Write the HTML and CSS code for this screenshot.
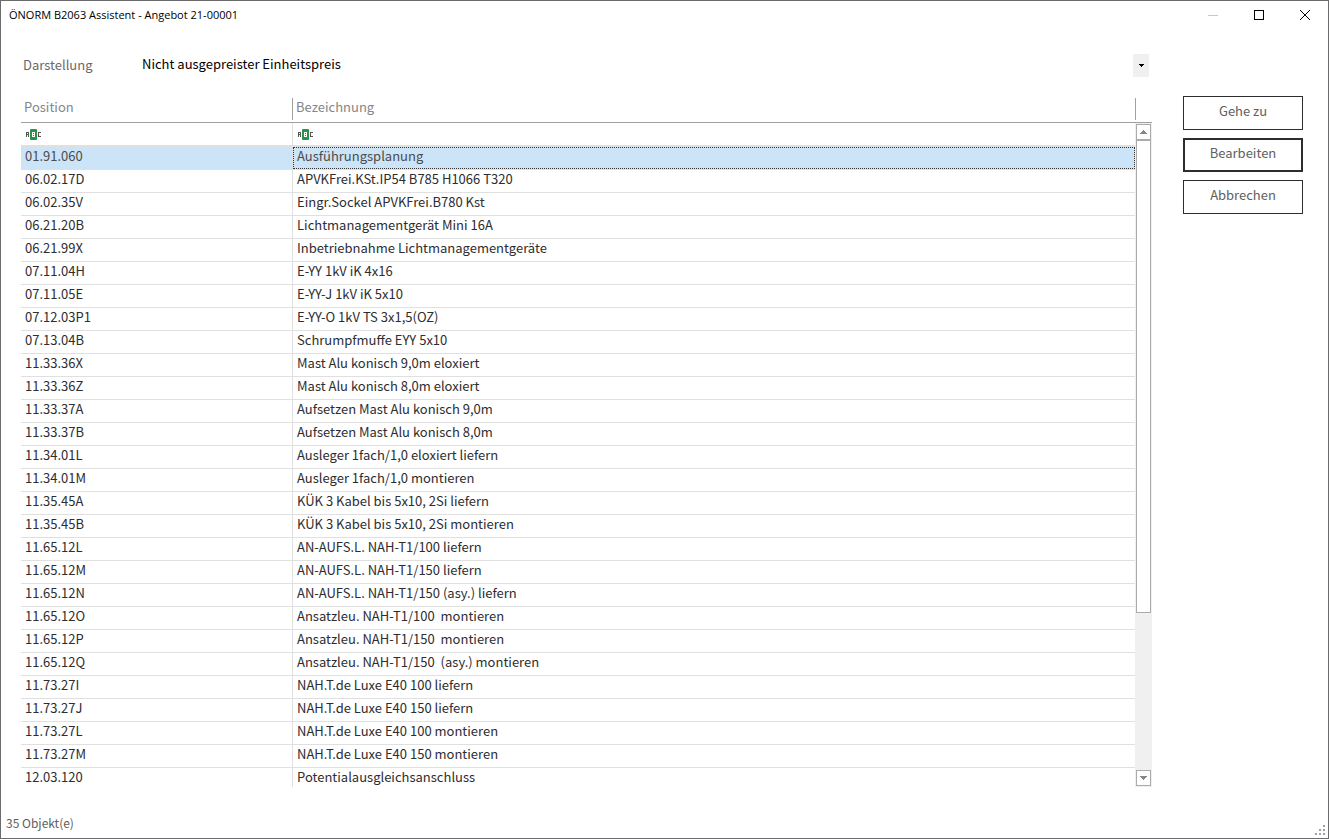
FILE: index.html
```
<!DOCTYPE html>
<html lang="de">
<head>
<meta charset="utf-8">
<title>ÖNORM B2063 Assistent - Angebot 21-00001</title>
<link rel="stylesheet" href="styles.css">
</head>
<body>
<svg class="defs" width="0" height="0" aria-hidden="true">
  <symbol id="abc" viewBox="0 0 16 11">
    <rect x="4" width="7" height="11" rx="1" fill="#2b9348" shape-rendering="geometricPrecision"/>
    <path d="M0 3h3v5H2V6H1v2H0zM1 4v1h1V4zM12 3h3v1h-2v3h2v1h-3z" fill="#555" fill-rule="evenodd"/>
    <path d="M6 3h3v5H6zM7 4v1h1V4zM7 6v1h1V6z" fill="#fff" fill-rule="evenodd"/>
  </symbol>
</svg>
<div class="window">
  <header class="titlebar">
    <h1 class="title">ÖNORM B2063 Assistent - Angebot 21-00001</h1>
    <button class="caption" type="button" aria-label="Minimieren" disabled><svg width="10" height="10" shape-rendering="crispEdges"><path d="M0 5h10v1H0z" fill="#c8c8c8"/></svg></button>
    <button class="caption" type="button" aria-label="Maximieren"><svg width="10" height="10" shape-rendering="crispEdges"><path d="M.5.5h9v9h-9z" fill="none" stroke="#000"/></svg></button>
    <button class="caption" type="button" aria-label="Schließen"><svg width="10" height="10"><path d="M0 0l10 10M10 0L0 10" stroke="#000"/></svg></button>
  </header>
  <div class="view">
    <label class="view-label" for="view">Darstellung</label>
    <div class="picker">
      <select id="view" class="picker-select"><option>Nicht ausgepreister Einheitspreis</option></select>
      <span class="picker-arrow"><svg width="5" height="3" shape-rendering="crispEdges"><path d="M0 0h5v1H4v1H3v1H2V2H1V1H0z"/></svg></span>
    </div>
  </div>
  <main class="main">
    <div class="grid">
      <div class="viewport">
        <table class="table">
          <colgroup><col class="col-pos"><col></colgroup>
          <thead>
            <tr class="head"><th scope="col">Position</th><th scope="col">Bezeichnung</th></tr>
            <tr class="filter"><td><svg width="16" height="11" shape-rendering="crispEdges"><use href="#abc"/></svg></td><td><svg width="16" height="11" shape-rendering="crispEdges"><use href="#abc"/></svg></td></tr>
          </thead>
          <tbody>
            <tr class="selected"><td>01.91.060</td><td class="focused"><div class="focus">Ausführungsplanung</div></td></tr>
            <tr><td>06.02.17D</td><td>APVKFrei.KSt.IP54 B785 H1066 T320</td></tr>
            <tr><td>06.02.35V</td><td>Eingr.Sockel APVKFrei.B780 Kst</td></tr>
            <tr><td>06.21.20B</td><td>Lichtmanagementgerät Mini 16A</td></tr>
            <tr><td>06.21.99X</td><td>Inbetriebnahme Lichtmanagementgeräte</td></tr>
            <tr><td>07.11.04H</td><td>E-YY 1kV iK 4x16</td></tr>
            <tr><td>07.11.05E</td><td>E-YY-J 1kV iK 5x10</td></tr>
            <tr><td>07.12.03P1</td><td>E-YY-O 1kV TS 3x1,5(OZ)</td></tr>
            <tr><td>07.13.04B</td><td>Schrumpfmuffe EYY 5x10</td></tr>
            <tr><td>11.33.36X</td><td>Mast Alu konisch 9,0m eloxiert</td></tr>
            <tr><td>11.33.36Z</td><td>Mast Alu konisch 8,0m eloxiert</td></tr>
            <tr><td>11.33.37A</td><td>Aufsetzen Mast Alu konisch 9,0m</td></tr>
            <tr><td>11.33.37B</td><td>Aufsetzen Mast Alu konisch 8,0m</td></tr>
            <tr><td>11.34.01L</td><td>Ausleger 1fach/1,0 eloxiert liefern</td></tr>
            <tr><td>11.34.01M</td><td>Ausleger 1fach/1,0 montieren</td></tr>
            <tr><td>11.35.45A</td><td>KÜK 3 Kabel bis 5x10, 2Si liefern</td></tr>
            <tr><td>11.35.45B</td><td>KÜK 3 Kabel bis 5x10, 2Si montieren</td></tr>
            <tr><td>11.65.12L</td><td>AN-AUFS.L. NAH-T1/100 liefern</td></tr>
            <tr><td>11.65.12M</td><td>AN-AUFS.L. NAH-T1/150 liefern</td></tr>
            <tr><td>11.65.12N</td><td>AN-AUFS.L. NAH-T1/150 (asy.) liefern</td></tr>
            <tr><td>11.65.12O</td><td>Ansatzleu. NAH-T1/100  montieren</td></tr>
            <tr><td>11.65.12P</td><td>Ansatzleu. NAH-T1/150  montieren</td></tr>
            <tr><td>11.65.12Q</td><td>Ansatzleu. NAH-T1/150  (asy.) montieren</td></tr>
            <tr><td>11.73.27I</td><td>NAH.T.de Luxe E40 100 liefern</td></tr>
            <tr><td>11.73.27J</td><td>NAH.T.de Luxe E40 150 liefern</td></tr>
            <tr><td>11.73.27L</td><td>NAH.T.de Luxe E40 100 montieren</td></tr>
            <tr><td>11.73.27M</td><td>NAH.T.de Luxe E40 150 montieren</td></tr>
            <tr><td>12.03.120</td><td>Potentialausgleichsanschluss</td></tr>
          </tbody>
        </table>
      </div>
      <div class="side">
        <div class="corner"></div>
        <div class="scrollbar">
          <button class="scroll-button" type="button" aria-label="Nach oben"><svg width="7" height="4" shape-rendering="crispEdges"><path d="M0 4V3h1V2h1V1h1V0h1v1h1v1h1v1h1v1z" fill="#868686"/></svg></button>
          <div class="thumb"></div>
          <div class="track"></div>
          <button class="scroll-button" type="button" aria-label="Nach unten"><svg width="7" height="4" shape-rendering="crispEdges"><path d="M0 0v1h1v1h1v1h1v1h1V3h1V2h1V1h1V0z" fill="#868686"/></svg></button>
        </div>
      </div>
    </div>
    <div class="actions">
      <button class="action" type="button">Gehe zu</button>
      <button class="action primary" type="button">Bearbeiten</button>
      <button class="action" type="button">Abbrechen</button>
    </div>
  </main>
  <footer class="status">
    <span>35 Objekt(e)</span>
    <svg width="10" height="10" shape-rendering="crispEdges"><path d="M8 0h2v2H8zM8 4h2v2H8zM8 8h2v2H8zM4 4h2v2H4zM4 8h2v2H4zM0 8h2v2H0z" fill="#a0a0a0"/></svg>
  </footer>
</div>
</body>
</html>
```
FILE: styles.css
```
* {
  box-sizing: border-box;
}

body {
  margin: 0;
  background: #fff;
  color: #2d2d30;
  font: 13px/18px "Noto Sans CJK SC", "Noto Sans", sans-serif;
}

button,
select {
  margin: 0;
  padding: 0;
  border: 0;
  border-radius: 0;
  background: none;
  font: inherit;
  appearance: none;
}

svg {
  display: block;
}

.defs {
  position: absolute;
}

.window {
  display: flex;
  flex-direction: column;
  height: 100vh;
  border: 1px solid #6b6b6d;
}

.titlebar {
  display: flex;
  align-items: center;
  height: 28px;
  padding-left: 8px;
}

.title {
  flex: 1;
  margin: 0;
  color: #000;
  font: 11px/16px "Open Sans", "Noto Sans", sans-serif;
}

.caption {
  display: flex;
  align-items: center;
  justify-content: center;
  width: 46px;
  height: 28px;
}

.view {
  display: flex;
  align-items: center;
  margin: 24px 179px 19px 22px;
}

.view-label {
  width: 115px;
  color: #6a6a6a;
}

.picker {
  display: grid;
  flex: 1;
  align-items: center;
}

.picker-select {
  grid-area: 1 / 1;
  height: 24px;
  padding: 0 20px 2px 4px;
  color: #000;
}

.picker-arrow {
  display: flex;
  grid-area: 1 / 1;
  align-items: center;
  justify-content: center;
  justify-self: end;
  width: 16px;
  height: 23px;
  background: #f0f0f0;
  pointer-events: none;
}

.main {
  display: flex;
  flex: 1;
  gap: 31px;
  min-height: 0;
  padding: 0 25px 0 20px;
}

.grid {
  display: flex;
  flex: 1;
  min-width: 0;
}

.viewport {
  flex: 1;
  min-width: 0;
  overflow: hidden;
}

.table {
  width: 100%;
  border-spacing: 0;
  table-layout: fixed;
}

.col-pos {
  width: 272px;
}

.table th,
.table td {
  padding: 0 4px 4px;
  border-bottom: 1px solid #e0e0e0;
  text-align: left;
  white-space: pre;
}

.table td:first-child {
  border-right: 1px solid #e0e0e0;
}

.table .head th {
  height: 27px;
  padding: 0 3px 4px;
  border-bottom-color: #a0a0a0;
  color: #868686;
  font-weight: normal;
}

.table .head th:first-child {
  background: linear-gradient(#a0a0a0, #a0a0a0) right 0 top 2px / 1px 22px no-repeat;
}

.table .filter td {
  height: 24px;
  padding: 0 5px;
  border-bottom-width: 2px;
}

.table .selected td {
  background: #cce4f7;
  color: #4c4c4c;
}

.table .focused {
  padding: 0;
}

.focus {
  padding: 0 4px 4px;
  outline: 1px dotted #333;
  outline-offset: -1px;
}

.side {
  display: flex;
  flex-direction: column;
  width: 17px;
}

.corner {
  height: 27px;
  border-bottom: 1px solid #a0a0a0;
  background: linear-gradient(#a0a0a0, #a0a0a0) left 0 top 2px / 1px 22px no-repeat;
}

.scrollbar {
  display: flex;
  flex: 1;
  flex-direction: column;
  padding: 1px;
  background: #f0f0f0;
}

.scroll-button {
  display: flex;
  align-items: center;
  justify-content: center;
  height: 16px;
  border: 1px solid #ababab;
  background: #fff;
}

.thumb {
  flex: 3;
  border: 1px solid #ababab;
  background: #fff;
}

.track {
  flex: 1;
}

.actions {
  display: flex;
  flex-direction: column;
  gap: 8px;
  width: 120px;
}

.action {
  height: 34px;
  padding-bottom: 4px;
  border: 1px solid #2d2d30;
  background: #fff;
  color: #606060;
}

.primary {
  border-width: 2px;
}

.status {
  display: flex;
  align-items: flex-end;
  justify-content: space-between;
  height: 51px;
  padding: 0 3px 3px 5px;
  color: #606060;
  font-size: 12px;
  line-height: 24px;
}
```
